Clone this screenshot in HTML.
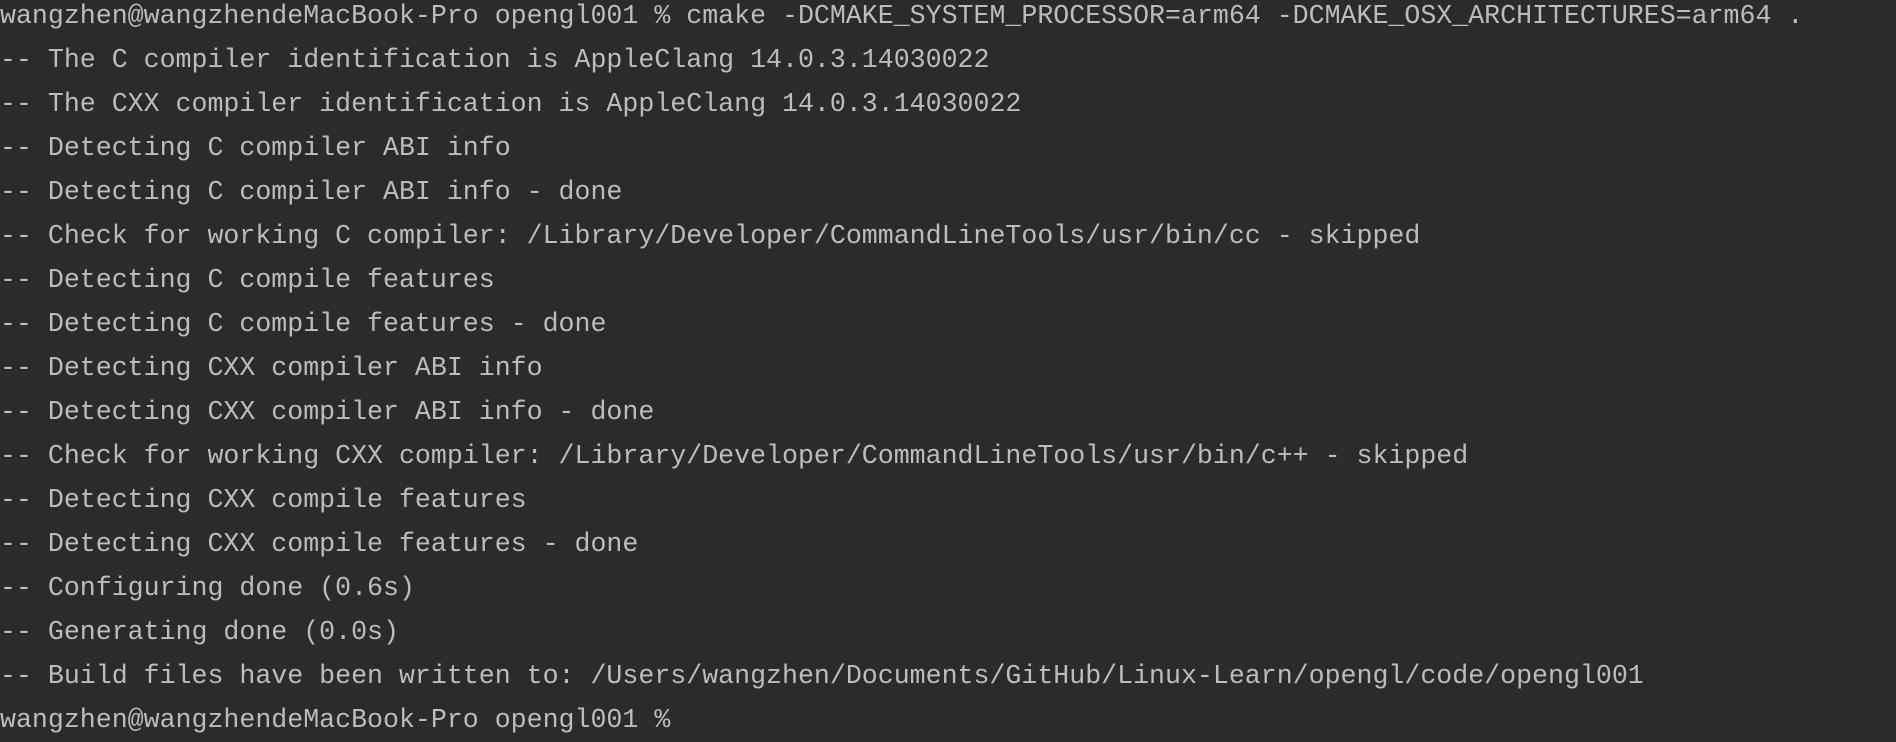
<!DOCTYPE html><html><head><style>
html,body{margin:0;padding:0;background:#2b2b2b;width:1896px;height:710px;overflow:hidden}
pre{margin:0;position:absolute;left:0;top:-6px;font-family:"Liberation Mono",monospace;font-size:26.6px;line-height:44px;color:#bcbcbc;white-space:pre;letter-spacing:0}
</style></head><body><pre>wangzhen@wangzhendeMacBook-Pro opengl001 % cmake -DCMAKE_SYSTEM_PROCESSOR=arm64 -DCMAKE_OSX_ARCHITECTURES=arm64 .
-- The C compiler identification is AppleClang 14.0.3.14030022
-- The CXX compiler identification is AppleClang 14.0.3.14030022
-- Detecting C compiler ABI info
-- Detecting C compiler ABI info - done
-- Check for working C compiler: /Library/Developer/CommandLineTools/usr/bin/cc - skipped
-- Detecting C compile features
-- Detecting C compile features - done
-- Detecting CXX compiler ABI info
-- Detecting CXX compiler ABI info - done
-- Check for working CXX compiler: /Library/Developer/CommandLineTools/usr/bin/c++ - skipped
-- Detecting CXX compile features
-- Detecting CXX compile features - done
-- Configuring done (0.6s)
-- Generating done (0.0s)
-- Build files have been written to: /Users/wangzhen/Documents/GitHub/Linux-Learn/opengl/code/opengl001
wangzhen@wangzhendeMacBook-Pro opengl001 % </pre></body></html>
